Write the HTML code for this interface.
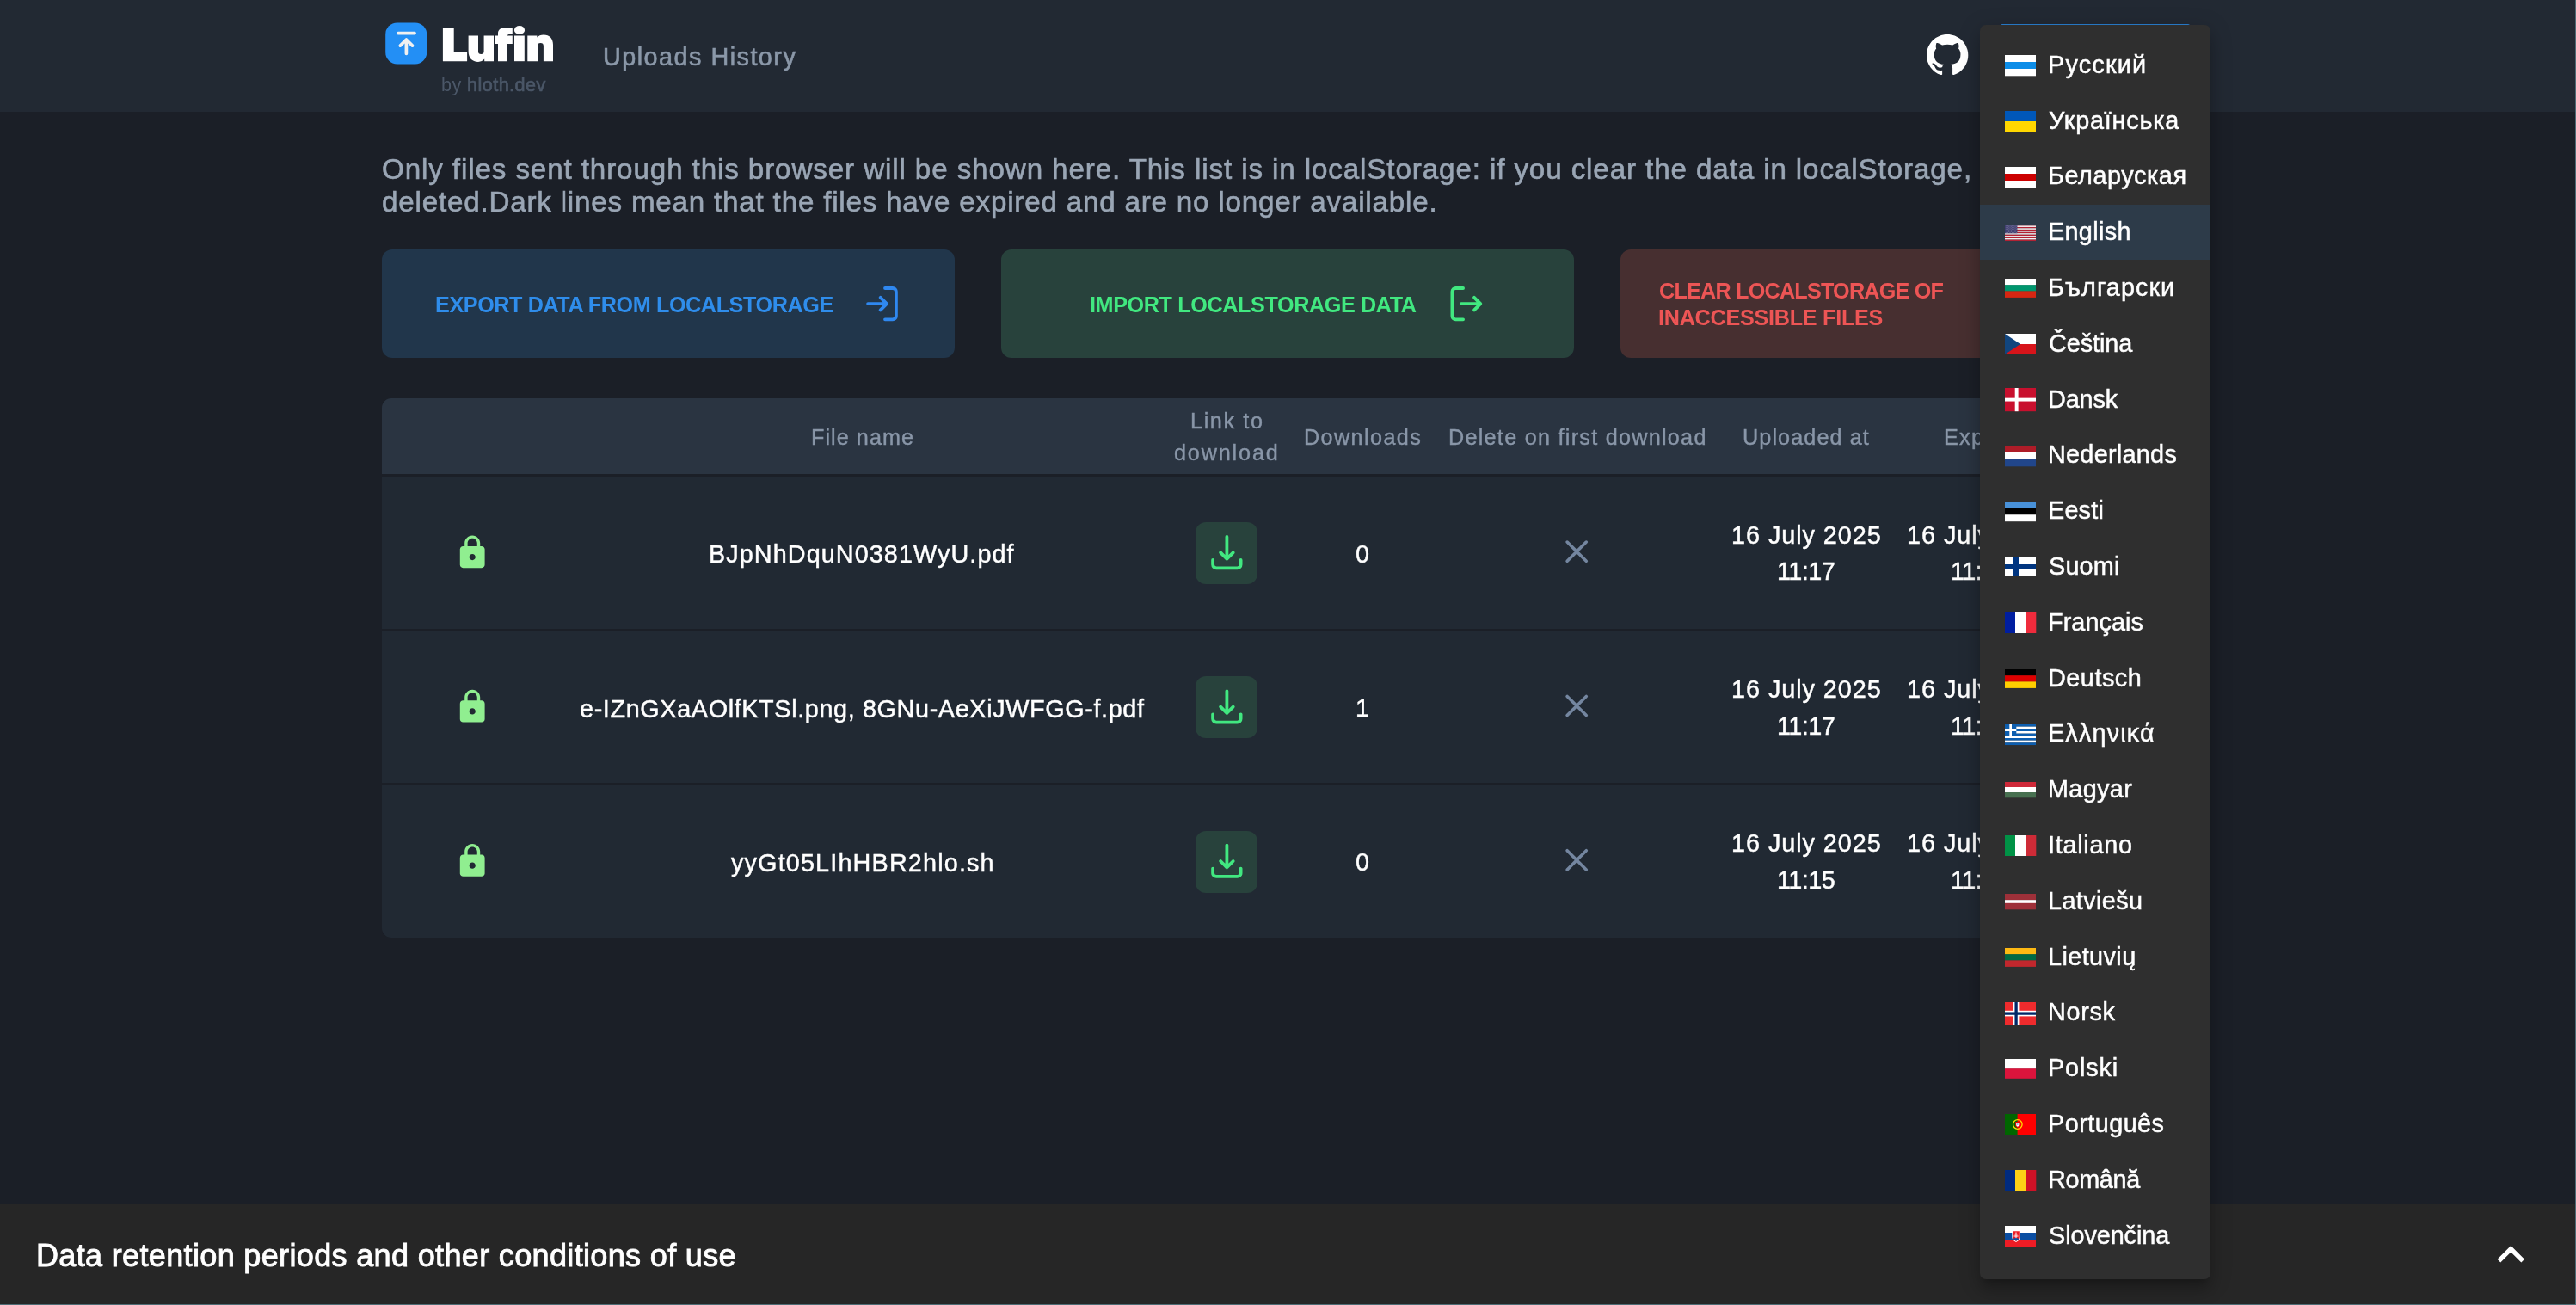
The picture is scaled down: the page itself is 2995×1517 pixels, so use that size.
<!DOCTYPE html>
<html lang="en">
<head>
<meta charset="utf-8">
<title>Lufin - Uploads History</title>
<style>
*{box-sizing:border-box}
html,body{margin:0;padding:0}
body{width:2995px;height:1517px;overflow:hidden;background:#1b1f27;font-family:"Liberation Sans",sans-serif;position:relative}
.abs,.t{position:absolute}
.t{white-space:pre;margin:0;will-change:transform}
#header{left:0;top:0;width:2995px;height:130px;background:#222933}
#edge-r{right:0;top:0;width:1px;height:1517px;background:#4e6c75}
#edge-b{left:0;bottom:0;width:2995px;height:1px;background:#4e6c75}
.btn{top:290px;height:126px;width:666px;border-radius:12px}
#b1{left:444px;background:#21364b}
#b2{left:1164px;background:#28423c}
#b3{left:1884px;background:#472f30}
#table{left:444px;top:463px;width:2106px;height:627px;border-radius:11px;background:#1b1f27;overflow:hidden}
#th{left:0;top:0;width:2106px;height:88px;background:#2a3441}
.tr{left:0;width:2106px;background:#212933}
.dl{width:72px;height:72px;border-radius:12px;background:#28423c;left:1390px}
#footer{left:0;top:1400px;width:2995px;height:117px;background:#262626}
#menu{left:2302px;top:29.1px;width:268px;height:1457.5px;background:#2f2f2f;border-radius:7px;box-shadow:0 9px 9px -5px rgba(0,0,0,.2),0 14px 18px 2px rgba(0,0,0,.14),0 5px 25px 4px rgba(0,0,0,.12)}
#sel{left:0;width:268px;height:63.9px;background:#2d3b49}
#selline{left:2326px;top:28px;width:220px;height:3px;background:#2a7fd1;border-radius:2px 2px 0 0}
svg{position:absolute;display:block;overflow:visible}
</style>
</head>
<body>
<header>
<div id="header" class="abs"></div>
<svg width="2995" height="1517" viewBox="0 0 2995 1517" style="left:0;top:0" aria-hidden="true"><rect x="448.2" y="26.4" width="48" height="48" rx="13.5" fill="#238ff5"/>
<g fill="none" stroke="#f0f0f0" stroke-width="3.7" stroke-linecap="round" stroke-linejoin="round"><path d="M462.9 38.6H482"/><path d="M472.4 62.3V46.3M465.3 53.1L472.4 46L479.5 53.1"/></g>
<g fill="#fff"><title>Lufin</title><path d="M514.9 31.9H527.7V60.2H543.1V71.2H514.9Z"/><path d="M544.6 41.5H556V59.8A3.3 3.3 0 0 0 562.6 59.8V41.5H574V71.2H563.2V68.6C561.5 70.6 559 71.900 556 71.900C549 71.900 544.6 67.5 544.6 59.5Z"/><path d="M579 71.2V50.9H575.9V41.5H579V38.5C579 34 583 31.9 589 31.9H595.8V40.100H593C591 40.100 590 40.6 590 41.5H595.8V50.9H590V71.2Z"/><path d="M598 41.5H609.8V71.2H598Z"/><ellipse cx="604" cy="35" rx="6.1" ry="5.1"/><path d="M613.3 41.5H624.4V43.6C626 41.6 628.8 40.4 632 40.4C639 40.4 643 44.8 643 52V71.2H631.9V53.5A3.45 3.45 0 0 0 625 53.5V71.2H613.3Z"/></g>
<g transform="translate(2240 39.4) scale(2.0125)"><path d="M12 .297c-6.63 0-12 5.373-12 12 0 5.303 3.438 9.8 8.205 11.385.6.113.82-.258.82-.577 0-.285-.01-1.04-.015-2.04-3.338.724-4.042-1.61-4.042-1.61C4.422 18.07 3.633 17.7 3.633 17.7c-1.087-.744.084-.729.084-.729 1.205.084 1.838 1.236 1.838 1.236 1.07 1.835 2.809 1.305 3.495.998.108-.776.417-1.305.76-1.605-2.665-.3-5.466-1.332-5.466-5.93 0-1.31.465-2.38 1.235-3.22-.135-.303-.54-1.523.105-3.176 0 0 1.005-.322 3.3 1.23.96-.267 1.98-.399 3-.405 1.02.006 2.04.138 3 .405 2.28-1.552 3.285-1.23 3.285-1.23.645 1.653.24 2.873.12 3.176.765.84 1.23 1.91 1.23 3.22 0 4.61-2.805 5.625-5.475 5.92.42.36.81 1.096.81 2.22 0 1.606-.015 2.896-.015 3.286 0 .315.21.69.825.57C20.565 22.092 24 17.592 24 12.297c0-6.627-5.373-12-12-12" fill="#fff"/></g></svg>
<div class="t logo" style="left:518.52px;top:22.75px;font-size:49.5px;line-height:59.4px;color:transparent;font-weight:700;">Lufin</div>
<div class="t" style="left:701.20px;top:48.74px;font-size:28.8px;line-height:34.56px;color:#8b98a9;letter-spacing:1.467px;-webkit-text-stroke:0.6px #8b98a9;">Uploads History</div>
<div class="t" style="left:513.40px;top:85.56px;font-size:21.6px;line-height:25.92px;color:#4b5768;letter-spacing:0.432px;">by <span style="-webkit-text-stroke:0.7px #4b5768">hloth.dev</span></div>
</header>
<main>
<div id="b1" class="abs btn"></div><div id="b2" class="abs btn"></div><div id="b3" class="abs btn"></div>
<div id="table" class="abs"><div id="th" class="abs"></div><div class="abs tr" style="top:91px;height:177px"></div><div class="abs tr" style="top:271px;height:176px"></div><div class="abs tr" style="top:450px;height:177px"></div></div>
<div class="abs dl" style="top:606.9px"></div>
<div class="abs dl" style="top:786.2px"></div>
<div class="abs dl" style="top:965.5px"></div>
<svg width="2995" height="1517" viewBox="0 0 2995 1517" style="left:0;top:0" aria-hidden="true"><g fill="none" stroke="#2f88f0" stroke-width="3.8" stroke-linecap="round" stroke-linejoin="round"><path d="M1029 335H1037.900A4 4 0 0 1 1041.900 339V367.300A4 4 0 0 1 1037.900 371.300H1029"/><path d="M1009.100 353.100H1031M1023.700 345.800L1031 353.100L1023.700 360.400"/></g>
<g fill="none" stroke="#41e880" stroke-width="3.8" stroke-linecap="round" stroke-linejoin="round"><path d="M1701.100 335H1692.400A4 4 0 0 0 1688.400 339V367.300A4 4 0 0 0 1692.400 371.300H1701.100"/><path d="M1698.800 353.100H1721.300M1714 345.800L1721.300 353.100L1714 360.400"/></g>
<g transform="translate(527.6 620.6) scale(1.8)"><path d="M18 8h-1V6c0-2.76-2.24-5-5-5S7 3.24 7 6v2H6c-1.1 0-2 .9-2 2v10c0 1.1.9 2 2 2h12c1.1 0 2-.9 2-2V10c0-1.1-.9-2-2-2m-6 9c-1.1 0-2-.9-2-2s.9-2 2-2 2 .9 2 2-.9 2-2 2m3.1-9H8.900V6c0-1.71 1.39-3.1 3.1-3.1s3.1 1.39 3.1 3.1z" fill="#90ee90"/></g>
<g transform="translate(0 0.0)" fill="none" stroke="#41e880" stroke-width="3.8" stroke-linecap="round" stroke-linejoin="round"><path d="M1426.400 624V649.600M1419.100 642.400L1426.400 649.700L1433.700 642.400"/><path d="M1410.100 651V656.300A4 4 0 0 0 1414.100 660.300H1438.600A4 4 0 0 0 1442.600 656.300V651"/></g>
<g transform="translate(1833.200 641.2)" stroke="#7486a0" stroke-width="3.6" stroke-linecap="round"><path d="M-11.100 -11.100L11.100 11.100M11.100 -11.100L-11.100 11.100"/></g>
<g transform="translate(527.6 799.9) scale(1.8)"><path d="M18 8h-1V6c0-2.76-2.24-5-5-5S7 3.24 7 6v2H6c-1.1 0-2 .9-2 2v10c0 1.1.9 2 2 2h12c1.1 0 2-.9 2-2V10c0-1.1-.9-2-2-2m-6 9c-1.1 0-2-.9-2-2s.9-2 2-2 2 .9 2 2-.9 2-2 2m3.1-9H8.900V6c0-1.71 1.39-3.1 3.1-3.1s3.1 1.39 3.1 3.1z" fill="#90ee90"/></g>
<g transform="translate(0 179.3)" fill="none" stroke="#41e880" stroke-width="3.8" stroke-linecap="round" stroke-linejoin="round"><path d="M1426.400 624V649.600M1419.100 642.400L1426.400 649.700L1433.700 642.400"/><path d="M1410.100 651V656.300A4 4 0 0 0 1414.100 660.300H1438.600A4 4 0 0 0 1442.600 656.300V651"/></g>
<g transform="translate(1833.200 820.5)" stroke="#7486a0" stroke-width="3.6" stroke-linecap="round"><path d="M-11.100 -11.100L11.100 11.100M11.100 -11.100L-11.100 11.100"/></g>
<g transform="translate(527.6 979.2) scale(1.8)"><path d="M18 8h-1V6c0-2.76-2.24-5-5-5S7 3.24 7 6v2H6c-1.1 0-2 .9-2 2v10c0 1.1.9 2 2 2h12c1.1 0 2-.9 2-2V10c0-1.1-.9-2-2-2m-6 9c-1.1 0-2-.9-2-2s.9-2 2-2 2 .9 2 2-.9 2-2 2m3.1-9H8.900V6c0-1.71 1.39-3.1 3.1-3.1s3.1 1.39 3.1 3.1z" fill="#90ee90"/></g>
<g transform="translate(0 358.6)" fill="none" stroke="#41e880" stroke-width="3.8" stroke-linecap="round" stroke-linejoin="round"><path d="M1426.400 624V649.600M1419.100 642.400L1426.400 649.700L1433.700 642.400"/><path d="M1410.100 651V656.300A4 4 0 0 0 1414.100 660.300H1438.600A4 4 0 0 0 1442.600 656.300V651"/></g>
<g transform="translate(1833.200 999.8)" stroke="#7486a0" stroke-width="3.6" stroke-linecap="round"><path d="M-11.100 -11.100L11.100 11.100M11.100 -11.100L-11.100 11.100"/></g></svg>
<div class="t p1" style="left:444.00px;top:176.58px;font-size:33.2px;line-height:39.84px;color:#9aa6b5;letter-spacing:0.881px;-webkit-text-stroke:0.6px #9aa6b5;">Only files sent through this browser will be shown here. This list is in localStorage: if you clear the data in localStorage,<span class="x"> the list will be</span></div>
<div class="t" style="left:444.00px;top:215.38px;font-size:33.2px;line-height:39.84px;color:#9aa6b5;letter-spacing:0.791px;-webkit-text-stroke:0.6px #9aa6b5;">deleted.Dark lines mean that the files have expired and are no longer available.</div>
<div class="t" style="left:505.60px;top:339.45px;font-size:25.2px;line-height:30.24px;color:#2f8deb;font-weight:700;letter-spacing:-0.415px;">EXPORT DATA FROM LOCALSTORAGE</div>
<div class="t" style="left:1266.80px;top:339.45px;font-size:25.2px;line-height:30.24px;color:#41e880;font-weight:700;letter-spacing:-0.391px;">IMPORT LOCALSTORAGE DATA</div>
<div class="t" style="left:1928.80px;top:323.45px;font-size:25.2px;line-height:30.24px;color:#ed5555;font-weight:700;letter-spacing:-0.778px;">CLEAR LOCALSTORAGE OF</div>
<div class="t" style="left:1927.80px;top:354.45px;font-size:25.2px;line-height:30.24px;color:#ed5555;font-weight:700;letter-spacing:-0.265px;">INACCESSIBLE FILES</div>
<div class="t" style="left:943.00px;top:493.35px;font-size:25.2px;line-height:30.24px;color:#8996a8;letter-spacing:1.051px;-webkit-text-stroke:0.4px #8996a8;">File name</div>
<div class="t" style="left:1383.80px;top:474.35px;font-size:25.2px;line-height:30.24px;color:#8996a8;letter-spacing:1.630px;-webkit-text-stroke:0.4px #8996a8;">Link to</div>
<div class="t" style="left:1365.40px;top:511.25px;font-size:25.2px;line-height:30.24px;color:#8996a8;letter-spacing:1.851px;-webkit-text-stroke:0.4px #8996a8;">download</div>
<div class="t" style="left:1516.00px;top:493.35px;font-size:25.2px;line-height:30.24px;color:#8996a8;letter-spacing:1.399px;-webkit-text-stroke:0.4px #8996a8;">Downloads</div>
<div class="t" style="left:1683.60px;top:493.35px;font-size:25.2px;line-height:30.24px;color:#8996a8;letter-spacing:1.268px;-webkit-text-stroke:0.4px #8996a8;">Delete on first download</div>
<div class="t" style="left:2026.20px;top:493.35px;font-size:25.2px;line-height:30.24px;color:#8996a8;letter-spacing:1.096px;-webkit-text-stroke:0.4px #8996a8;">Uploaded at</div>
<div class="t" style="left:2259.60px;top:493.35px;font-size:25.2px;line-height:30.24px;color:#8996a8;letter-spacing:1.267px;-webkit-text-stroke:0.4px #8996a8;">Expires at</div>
<div class="t" style="left:824.20px;top:627.24px;font-size:28.8px;line-height:34.56px;color:#fff;letter-spacing:1.069px;-webkit-text-stroke:0.45px #fff;">BJpNhDquN0381WyU.pdf</div>
<div class="t" style="left:1575.99px;top:626.84px;font-size:28.8px;line-height:34.56px;color:#fff;-webkit-text-stroke:0.45px #fff;">0</div>
<div class="t" style="left:2013.20px;top:604.74px;font-size:28.8px;line-height:34.56px;color:#fff;letter-spacing:0.953px;-webkit-text-stroke:0.45px #fff;">16 July 2025</div>
<div class="t" style="left:2066.00px;top:647.44px;font-size:28.8px;line-height:34.56px;color:#fff;letter-spacing:-0.534px;-webkit-text-stroke:0.45px #fff;">11:17</div>
<div class="t u" style="left:2217.20px;top:604.74px;font-size:28.8px;line-height:34.56px;color:#fff;letter-spacing:0.953px;-webkit-text-stroke:0.45px #fff;">16 July 2025</div>
<div class="t u" style="left:2267.80px;top:647.44px;font-size:28.8px;line-height:34.56px;color:#fff;letter-spacing:-0.534px;-webkit-text-stroke:0.45px #fff;">11:17</div>
<div class="t" style="left:673.60px;top:806.54px;font-size:28.8px;line-height:34.56px;color:#fff;letter-spacing:0.621px;-webkit-text-stroke:0.45px #fff;">e-IZnGXaAOlfKTSl.png, 8GNu-AeXiJWFGG-f.pdf</div>
<div class="t" style="left:1575.99px;top:806.14px;font-size:28.8px;line-height:34.56px;color:#fff;-webkit-text-stroke:0.45px #fff;">1</div>
<div class="t" style="left:2013.20px;top:784.04px;font-size:28.8px;line-height:34.56px;color:#fff;letter-spacing:0.953px;-webkit-text-stroke:0.45px #fff;">16 July 2025</div>
<div class="t" style="left:2066.00px;top:826.74px;font-size:28.8px;line-height:34.56px;color:#fff;letter-spacing:-0.534px;-webkit-text-stroke:0.45px #fff;">11:17</div>
<div class="t u" style="left:2217.20px;top:784.04px;font-size:28.8px;line-height:34.56px;color:#fff;letter-spacing:0.953px;-webkit-text-stroke:0.45px #fff;">16 July 2025</div>
<div class="t u" style="left:2267.80px;top:826.74px;font-size:28.8px;line-height:34.56px;color:#fff;letter-spacing:-0.534px;-webkit-text-stroke:0.45px #fff;">11:17</div>
<div class="t" style="left:850.40px;top:985.84px;font-size:28.8px;line-height:34.56px;color:#fff;letter-spacing:1.149px;-webkit-text-stroke:0.45px #fff;">yyGt05LIhHBR2hlo.sh</div>
<div class="t" style="left:1575.99px;top:985.44px;font-size:28.8px;line-height:34.56px;color:#fff;-webkit-text-stroke:0.45px #fff;">0</div>
<div class="t" style="left:2013.20px;top:963.34px;font-size:28.8px;line-height:34.56px;color:#fff;letter-spacing:0.953px;-webkit-text-stroke:0.45px #fff;">16 July 2025</div>
<div class="t" style="left:2066.00px;top:1006.04px;font-size:28.8px;line-height:34.56px;color:#fff;letter-spacing:-0.534px;-webkit-text-stroke:0.45px #fff;">11:15</div>
<div class="t u" style="left:2217.20px;top:963.34px;font-size:28.8px;line-height:34.56px;color:#fff;letter-spacing:0.953px;-webkit-text-stroke:0.45px #fff;">16 July 2025</div>
<div class="t u" style="left:2267.80px;top:1006.04px;font-size:28.8px;line-height:34.56px;color:#fff;letter-spacing:-0.534px;-webkit-text-stroke:0.45px #fff;">11:15</div>
</main>
<footer>
<div id="footer" class="abs"></div>
<svg width="2995" height="1517" viewBox="0 0 2995 1517" style="left:0;top:0" aria-hidden="true"><g transform="translate(2887.8 1427) scale(2.625)"><path d="m12 8-6 6 1.41 1.41L12 10.83l4.59 4.58L18 14z" fill="#fff"/></g></svg>
<div class="t" style="left:42.20px;top:1437.73px;font-size:36px;line-height:43.2px;color:#fff;letter-spacing:0.348px;-webkit-text-stroke:0.9px #fff;">Data retention periods and other conditions of use</div>
</footer>
<div id="selline" class="abs"></div>
<div id="menu" class="abs" role="listbox"><div id="sel" class="abs" style="top:208.8px"></div>
<svg style="left:28.8px;top:35.0px" width="36" height="24" viewBox="0 0 36 24" preserveAspectRatio="none"><rect x="0" y="0.00" width="36" height="8.30" fill="#fff"/><rect x="0" y="8.00" width="36" height="8.30" fill="#0c8de8"/><rect x="0" y="16.00" width="36" height="8.30" fill="#fff"/></svg>
<svg style="left:28.8px;top:99.8px" width="36" height="24" viewBox="0 0 36 24" preserveAspectRatio="none"><rect x="0" y="0.00" width="36" height="12.30" fill="#0057b8"/><rect x="0" y="12.00" width="36" height="12.30" fill="#ffd700"/></svg>
<svg style="left:28.8px;top:164.6px" width="36" height="24" viewBox="0 0 36 24" preserveAspectRatio="none"><rect x="0" y="0.00" width="36" height="8.30" fill="#fff"/><rect x="0" y="8.00" width="36" height="8.30" fill="#cc0000"/><rect x="0" y="16.00" width="36" height="8.30" fill="#fff"/></svg>
<svg style="left:28.8px;top:231.9px" width="36" height="19" viewBox="0 0 36 19" preserveAspectRatio="none"><rect x="0" y="0.00" width="36" height="1.51" fill="#b22234"/><rect x="0" y="1.46" width="36" height="1.51" fill="#fff"/><rect x="0" y="2.92" width="36" height="1.51" fill="#b22234"/><rect x="0" y="4.38" width="36" height="1.51" fill="#fff"/><rect x="0" y="5.85" width="36" height="1.51" fill="#b22234"/><rect x="0" y="7.31" width="36" height="1.51" fill="#fff"/><rect x="0" y="8.77" width="36" height="1.51" fill="#b22234"/><rect x="0" y="10.23" width="36" height="1.51" fill="#fff"/><rect x="0" y="11.69" width="36" height="1.51" fill="#b22234"/><rect x="0" y="13.15" width="36" height="1.51" fill="#fff"/><rect x="0" y="14.62" width="36" height="1.51" fill="#b22234"/><rect x="0" y="16.08" width="36" height="1.51" fill="#fff"/><rect x="0" y="17.54" width="36" height="1.51" fill="#b22234"/><rect x="0" y="0" width="14.4" height="10.23" fill="#3c3b6e"/><circle cx="1.20" cy="1.02" r="0.42" fill="#fff" fill-opacity="0.75"/><circle cx="3.60" cy="1.02" r="0.42" fill="#fff" fill-opacity="0.75"/><circle cx="6.00" cy="1.02" r="0.42" fill="#fff" fill-opacity="0.75"/><circle cx="8.40" cy="1.02" r="0.42" fill="#fff" fill-opacity="0.75"/><circle cx="10.80" cy="1.02" r="0.42" fill="#fff" fill-opacity="0.75"/><circle cx="13.20" cy="1.02" r="0.42" fill="#fff" fill-opacity="0.75"/><circle cx="2.40" cy="2.04" r="0.42" fill="#fff" fill-opacity="0.75"/><circle cx="4.80" cy="2.04" r="0.42" fill="#fff" fill-opacity="0.75"/><circle cx="7.20" cy="2.04" r="0.42" fill="#fff" fill-opacity="0.75"/><circle cx="9.60" cy="2.04" r="0.42" fill="#fff" fill-opacity="0.75"/><circle cx="12.00" cy="2.04" r="0.42" fill="#fff" fill-opacity="0.75"/><circle cx="1.20" cy="3.06" r="0.42" fill="#fff" fill-opacity="0.75"/><circle cx="3.60" cy="3.06" r="0.42" fill="#fff" fill-opacity="0.75"/><circle cx="6.00" cy="3.06" r="0.42" fill="#fff" fill-opacity="0.75"/><circle cx="8.40" cy="3.06" r="0.42" fill="#fff" fill-opacity="0.75"/><circle cx="10.80" cy="3.06" r="0.42" fill="#fff" fill-opacity="0.75"/><circle cx="13.20" cy="3.06" r="0.42" fill="#fff" fill-opacity="0.75"/><circle cx="2.40" cy="4.08" r="0.42" fill="#fff" fill-opacity="0.75"/><circle cx="4.80" cy="4.08" r="0.42" fill="#fff" fill-opacity="0.75"/><circle cx="7.20" cy="4.08" r="0.42" fill="#fff" fill-opacity="0.75"/><circle cx="9.60" cy="4.08" r="0.42" fill="#fff" fill-opacity="0.75"/><circle cx="12.00" cy="4.08" r="0.42" fill="#fff" fill-opacity="0.75"/><circle cx="1.20" cy="5.10" r="0.42" fill="#fff" fill-opacity="0.75"/><circle cx="3.60" cy="5.10" r="0.42" fill="#fff" fill-opacity="0.75"/><circle cx="6.00" cy="5.10" r="0.42" fill="#fff" fill-opacity="0.75"/><circle cx="8.40" cy="5.10" r="0.42" fill="#fff" fill-opacity="0.75"/><circle cx="10.80" cy="5.10" r="0.42" fill="#fff" fill-opacity="0.75"/><circle cx="13.20" cy="5.10" r="0.42" fill="#fff" fill-opacity="0.75"/><circle cx="2.40" cy="6.12" r="0.42" fill="#fff" fill-opacity="0.75"/><circle cx="4.80" cy="6.12" r="0.42" fill="#fff" fill-opacity="0.75"/><circle cx="7.20" cy="6.12" r="0.42" fill="#fff" fill-opacity="0.75"/><circle cx="9.60" cy="6.12" r="0.42" fill="#fff" fill-opacity="0.75"/><circle cx="12.00" cy="6.12" r="0.42" fill="#fff" fill-opacity="0.75"/><circle cx="1.20" cy="7.14" r="0.42" fill="#fff" fill-opacity="0.75"/><circle cx="3.60" cy="7.14" r="0.42" fill="#fff" fill-opacity="0.75"/><circle cx="6.00" cy="7.14" r="0.42" fill="#fff" fill-opacity="0.75"/><circle cx="8.40" cy="7.14" r="0.42" fill="#fff" fill-opacity="0.75"/><circle cx="10.80" cy="7.14" r="0.42" fill="#fff" fill-opacity="0.75"/><circle cx="13.20" cy="7.14" r="0.42" fill="#fff" fill-opacity="0.75"/><circle cx="2.40" cy="8.16" r="0.42" fill="#fff" fill-opacity="0.75"/><circle cx="4.80" cy="8.16" r="0.42" fill="#fff" fill-opacity="0.75"/><circle cx="7.20" cy="8.16" r="0.42" fill="#fff" fill-opacity="0.75"/><circle cx="9.60" cy="8.16" r="0.42" fill="#fff" fill-opacity="0.75"/><circle cx="12.00" cy="8.16" r="0.42" fill="#fff" fill-opacity="0.75"/><circle cx="1.20" cy="9.18" r="0.42" fill="#fff" fill-opacity="0.75"/><circle cx="3.60" cy="9.18" r="0.42" fill="#fff" fill-opacity="0.75"/><circle cx="6.00" cy="9.18" r="0.42" fill="#fff" fill-opacity="0.75"/><circle cx="8.40" cy="9.18" r="0.42" fill="#fff" fill-opacity="0.75"/><circle cx="10.80" cy="9.18" r="0.42" fill="#fff" fill-opacity="0.75"/><circle cx="13.20" cy="9.18" r="0.42" fill="#fff" fill-opacity="0.75"/></svg>
<svg style="left:28.8px;top:295.4px" width="36" height="21.6" viewBox="0 0 36 21.6" preserveAspectRatio="none"><rect x="0" y="0.00" width="36" height="7.50" fill="#fff"/><rect x="0" y="7.20" width="36" height="7.50" fill="#00966e"/><rect x="0" y="14.40" width="36" height="7.50" fill="#d62612"/></svg>
<svg style="left:28.8px;top:359.0px" width="36" height="24" viewBox="0 0 36 24" preserveAspectRatio="none"><rect width="36" height="12" fill="#fff"/><rect y="12" width="36" height="12" fill="#d7141a"/><path d="M0 0L18 12L0 24z" fill="#11457e"/></svg>
<svg style="left:28.8px;top:422.2px" width="36" height="27.2" viewBox="0 0 36 27.2" preserveAspectRatio="none"><rect width="36" height="27.2" fill="#c8102e"/><rect x="11.7" width="3.9" height="27.2" fill="#fff"/><rect y="11.65" width="36" height="3.9" fill="#fff"/></svg>
<svg style="left:28.8px;top:488.6px" width="36" height="24" viewBox="0 0 36 24" preserveAspectRatio="none"><rect x="0" y="0.00" width="36" height="8.30" fill="#ae1c28"/><rect x="0" y="8.00" width="36" height="8.30" fill="#fff"/><rect x="0" y="16.00" width="36" height="8.30" fill="#21468b"/></svg>
<svg style="left:28.8px;top:553.9px" width="36" height="22.9" viewBox="0 0 36 22.9" preserveAspectRatio="none"><rect x="0" y="0.00" width="36" height="7.93" fill="#4891d9"/><rect x="0" y="7.63" width="36" height="7.93" fill="#000"/><rect x="0" y="15.27" width="36" height="7.93" fill="#fff"/></svg>
<svg style="left:28.8px;top:619.2px" width="36" height="22" viewBox="0 0 36 22" preserveAspectRatio="none"><rect width="36" height="22" fill="#fff"/><rect x="10" width="6" height="22" fill="#003580"/><rect y="8" width="36" height="6" fill="#003580"/></svg>
<svg style="left:28.8px;top:683.0px" width="36" height="24" viewBox="0 0 36 24" preserveAspectRatio="none"><rect x="0.00" y="0" width="12.30" height="24" fill="#001ea0"/><rect x="12.00" y="0" width="12.30" height="24" fill="#fff"/><rect x="24.00" y="0" width="12.30" height="24" fill="#ef2b3c"/></svg>
<svg style="left:28.8px;top:749.0px" width="36" height="21.6" viewBox="0 0 36 21.6" preserveAspectRatio="none"><rect x="0" y="0.00" width="36" height="7.50" fill="#000"/><rect x="0" y="7.20" width="36" height="7.50" fill="#dd0000"/><rect x="0" y="14.40" width="36" height="7.50" fill="#ffce00"/></svg>
<svg style="left:28.8px;top:812.6px" width="36" height="24" viewBox="0 0 36 24" preserveAspectRatio="none"><rect y="0.00" width="36" height="2.72" fill="#0d5eaf"/><rect y="2.67" width="36" height="2.72" fill="#fff"/><rect y="5.33" width="36" height="2.72" fill="#0d5eaf"/><rect y="8.00" width="36" height="2.72" fill="#fff"/><rect y="10.67" width="36" height="2.72" fill="#0d5eaf"/><rect y="13.33" width="36" height="2.72" fill="#fff"/><rect y="16.00" width="36" height="2.72" fill="#0d5eaf"/><rect y="18.67" width="36" height="2.72" fill="#fff"/><rect y="21.33" width="36" height="2.72" fill="#0d5eaf"/><rect width="13.33" height="13.33" fill="#0d5eaf"/><rect x="5.33" width="2.67" height="13.33" fill="#fff"/><rect y="5.33" width="13.33" height="2.67" fill="#fff"/></svg>
<svg style="left:28.8px;top:880.4px" width="36" height="18" viewBox="0 0 36 18" preserveAspectRatio="none"><rect x="0" y="0.00" width="36" height="6.30" fill="#ce2939"/><rect x="0" y="6.00" width="36" height="6.30" fill="#fff"/><rect x="0" y="12.00" width="36" height="6.30" fill="#477050"/></svg>
<svg style="left:28.8px;top:942.2px" width="36" height="24" viewBox="0 0 36 24" preserveAspectRatio="none"><rect x="0.00" y="0" width="12.30" height="24" fill="#009246"/><rect x="12.00" y="0" width="12.30" height="24" fill="#fff"/><rect x="24.00" y="0" width="12.30" height="24" fill="#ce2b37"/></svg>
<svg style="left:28.8px;top:1010.0px" width="36" height="18" viewBox="0 0 36 18" preserveAspectRatio="none"><rect x="0" y="0.00" width="36" height="7.50" fill="#9e3039"/><rect x="0" y="7.20" width="36" height="3.90" fill="#fff"/><rect x="0" y="10.80" width="36" height="7.50" fill="#9e3039"/></svg>
<svg style="left:28.8px;top:1073.0px" width="36" height="21.6" viewBox="0 0 36 21.6" preserveAspectRatio="none"><rect x="0" y="0.00" width="36" height="7.50" fill="#fdb913"/><rect x="0" y="7.20" width="36" height="7.50" fill="#006a44"/><rect x="0" y="14.40" width="36" height="7.50" fill="#c1272d"/></svg>
<svg style="left:28.8px;top:1135.5px" width="36" height="26.2" viewBox="0 0 36 26.2" preserveAspectRatio="none"><rect width="36" height="26.2" fill="#ef2b2d"/><rect x="9.8" width="6.6" height="26.2" fill="#fff"/><rect y="9.8" width="36" height="6.6" fill="#fff"/><rect x="11.45" width="3.3" height="26.2" fill="#002868"/><rect y="11.45" width="36" height="3.3" fill="#002868"/></svg>
<svg style="left:28.8px;top:1202.1px" width="36" height="22.5" viewBox="0 0 36 22.5" preserveAspectRatio="none"><rect x="0" y="0.00" width="36" height="11.55" fill="#fff"/><rect x="0" y="11.25" width="36" height="11.55" fill="#dc143c"/></svg>
<svg style="left:28.8px;top:1266.2px" width="36" height="24" viewBox="0 0 36 24" preserveAspectRatio="none"><rect width="36" height="24" fill="#f00"/><rect width="14.6" height="24" fill="#060"/><circle cx="14.8" cy="12" r="5.300" fill="none" stroke="#fd0" stroke-width="1.300"/><path d="M12.2 8.900h5.200v4.200c0 1.600-1.100 2.500-2.600 2.900c-1.500-.4-2.600-1.300-2.600-2.900z" fill="#e00"/><path d="M13.200 9.900h3.200v3.100c0 .9-.7 1.500-1.600 1.800c-.9-.3-1.600-.9-1.600-1.800z" fill="#fff"/><circle cx="14.8" cy="12" r="0.900" fill="#8fb4e8"/></svg>
<svg style="left:28.8px;top:1331.0px" width="36" height="24" viewBox="0 0 36 24" preserveAspectRatio="none"><rect x="0.00" y="0" width="12.30" height="24" fill="#002b7f"/><rect x="12.00" y="0" width="12.30" height="24" fill="#fcd116"/><rect x="24.00" y="0" width="12.30" height="24" fill="#ce1126"/></svg>
<svg style="left:28.8px;top:1395.8px" width="36" height="24" viewBox="0 0 36 24" preserveAspectRatio="none"><rect width="36" height="8" fill="#fff"/><rect y="8" width="36" height="8" fill="#0b4ea2"/><rect y="16" width="36" height="8" fill="#ee1c25"/><g transform="translate(1.900 0)"><path d="M6.4 5.4h9.4v7.2c0 3.6-2.6 5.4-4.7 6.4c-2.1-1-4.7-2.8-4.7-6.4z" fill="#fff"/><path d="M7.3 6.3h7.6v6.3c0 2.9-2 4.4-3.8 5.3c-1.8-.9-3.8-2.4-3.8-5.3z" fill="#ee1c25"/><path d="M10.6 7.6h1v1.6h1.5v1h-1.5v1.3h2v1h-2v2.6h-1v-2.6h-2v-1h2v-1.3h-1.5v-1h1.5z" fill="#fff"/><path d="M7.9 15.2c.8-1 1.700-1.300 2.300-.7c.4-.9 1.400-.9 1.800 0c.6-.6 1.500-.3 2.300.7c-.9 1.200-2 1.900-3.200 2.400c-1.200-.5-2.300-1.200-3.200-2.400z" fill="#0b4ea2"/></g></svg></div>
<div class="t mi" style="left:2380.60px;top:57.84px;font-size:28.8px;line-height:34.56px;color:#fff;letter-spacing:1.223px;-webkit-text-stroke:0.5px #fff;">Русский</div>
<div class="t mi" style="left:2381.60px;top:122.64px;font-size:28.8px;line-height:34.56px;color:#fff;letter-spacing:0.779px;-webkit-text-stroke:0.5px #fff;">Українська</div>
<div class="t mi" style="left:2380.60px;top:187.44px;font-size:28.8px;line-height:34.56px;color:#fff;letter-spacing:0.578px;-webkit-text-stroke:0.5px #fff;">Беларуская</div>
<div class="t mi" style="left:2380.60px;top:252.24px;font-size:28.8px;line-height:34.56px;color:#fff;letter-spacing:0.324px;-webkit-text-stroke:0.5px #fff;">English</div>
<div class="t mi" style="left:2380.60px;top:317.04px;font-size:28.8px;line-height:34.56px;color:#fff;letter-spacing:1.064px;-webkit-text-stroke:0.5px #fff;">Български</div>
<div class="t mi" style="left:2381.60px;top:381.84px;font-size:28.8px;line-height:34.56px;color:#fff;letter-spacing:-0.073px;-webkit-text-stroke:0.5px #fff;">Čeština</div>
<div class="t mi" style="left:2380.60px;top:446.64px;font-size:28.8px;line-height:34.56px;color:#fff;letter-spacing:-0.106px;-webkit-text-stroke:0.5px #fff;">Dansk</div>
<div class="t mi" style="left:2380.60px;top:511.44px;font-size:28.8px;line-height:34.56px;color:#fff;letter-spacing:0.280px;-webkit-text-stroke:0.5px #fff;">Nederlands</div>
<div class="t mi" style="left:2380.60px;top:576.24px;font-size:28.8px;line-height:34.56px;color:#fff;letter-spacing:0.192px;-webkit-text-stroke:0.5px #fff;">Eesti</div>
<div class="t mi" style="left:2381.60px;top:641.04px;font-size:28.8px;line-height:34.56px;color:#fff;letter-spacing:0.194px;-webkit-text-stroke:0.5px #fff;">Suomi</div>
<div class="t mi" style="left:2380.60px;top:705.84px;font-size:28.8px;line-height:34.56px;color:#fff;letter-spacing:0.083px;-webkit-text-stroke:0.5px #fff;">Français</div>
<div class="t mi" style="left:2380.60px;top:770.64px;font-size:28.8px;line-height:34.56px;color:#fff;letter-spacing:0.527px;-webkit-text-stroke:0.5px #fff;">Deutsch</div>
<div class="t mi" style="left:2380.60px;top:835.44px;font-size:28.8px;line-height:34.56px;color:#fff;letter-spacing:1.155px;-webkit-text-stroke:0.5px #fff;">Ελληνικά</div>
<div class="t mi" style="left:2380.60px;top:900.24px;font-size:28.8px;line-height:34.56px;color:#fff;letter-spacing:0.354px;-webkit-text-stroke:0.5px #fff;">Magyar</div>
<div class="t mi" style="left:2380.60px;top:965.04px;font-size:28.8px;line-height:34.56px;color:#fff;letter-spacing:0.734px;-webkit-text-stroke:0.5px #fff;">Italiano</div>
<div class="t mi" style="left:2380.60px;top:1029.84px;font-size:28.8px;line-height:34.56px;color:#fff;letter-spacing:0.391px;-webkit-text-stroke:0.5px #fff;">Latviešu</div>
<div class="t mi" style="left:2380.60px;top:1094.64px;font-size:28.8px;line-height:34.56px;color:#fff;letter-spacing:0.419px;-webkit-text-stroke:0.5px #fff;">Lietuvių</div>
<div class="t mi" style="left:2380.60px;top:1159.44px;font-size:28.8px;line-height:34.56px;color:#fff;letter-spacing:0.699px;-webkit-text-stroke:0.5px #fff;">Norsk</div>
<div class="t mi" style="left:2380.60px;top:1224.24px;font-size:28.8px;line-height:34.56px;color:#fff;letter-spacing:0.874px;-webkit-text-stroke:0.5px #fff;">Polski</div>
<div class="t mi" style="left:2380.60px;top:1289.04px;font-size:28.8px;line-height:34.56px;color:#fff;letter-spacing:0.465px;-webkit-text-stroke:0.5px #fff;">Português</div>
<div class="t mi" style="left:2380.60px;top:1353.84px;font-size:28.8px;line-height:34.56px;color:#fff;letter-spacing:-0.332px;-webkit-text-stroke:0.5px #fff;">Română</div>
<div class="t mi" style="left:2381.60px;top:1418.64px;font-size:28.8px;line-height:34.56px;color:#fff;letter-spacing:-0.077px;-webkit-text-stroke:0.5px #fff;">Slovenčina</div>
<div id="edge-r" class="abs"></div><div id="edge-b" class="abs"></div>
</body>
</html>
